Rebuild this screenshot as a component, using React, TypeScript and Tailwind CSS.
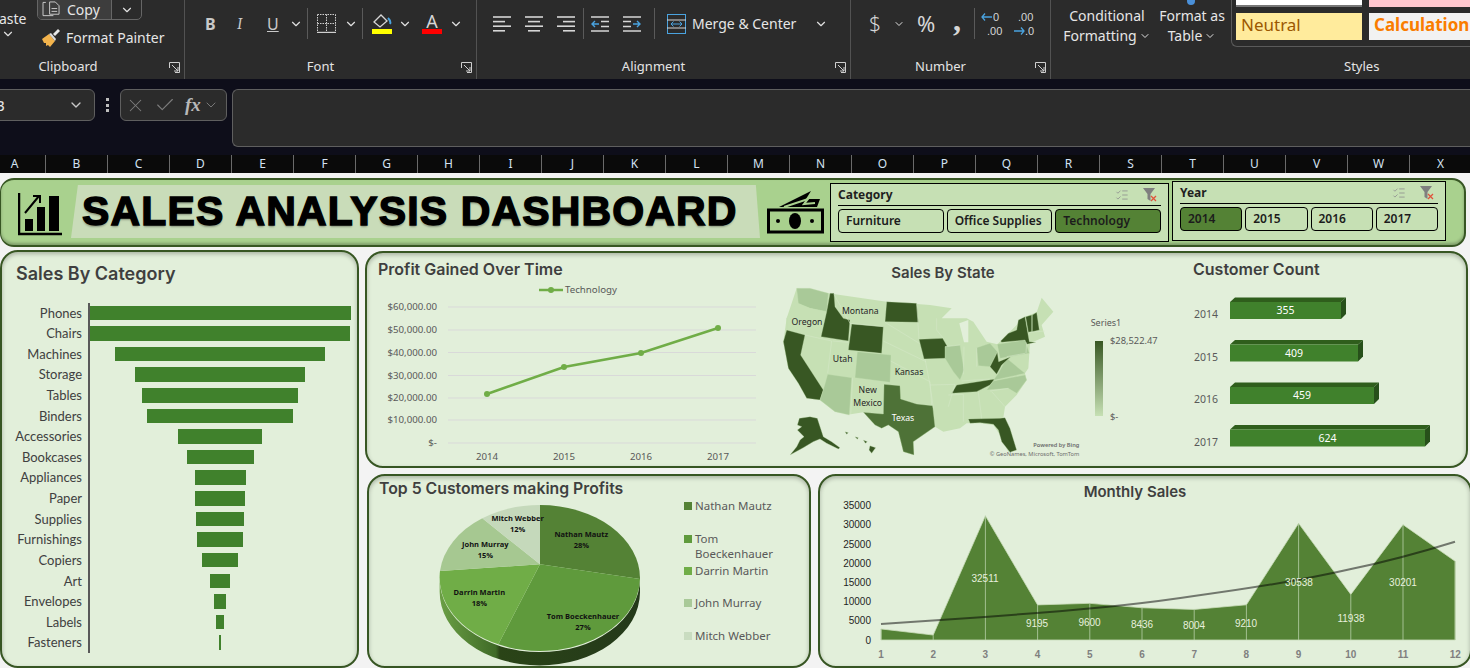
import { Check, ChevronDown, ListChecks, X } from 'lucide-react'

const columns = 'ABCDEFGHIJKLMNOPQRSTUVWX'.split('')

const categories: [string, number][] = [
  ['Phones', 261],
  ['Chairs', 260],
  ['Machines', 210],
  ['Storage', 170],
  ['Tables', 156],
  ['Binders', 146],
  ['Accessories', 84],
  ['Bookcases', 67],
  ['Appliances', 51],
  ['Paper', 50],
  ['Supplies', 48],
  ['Furnishings', 46],
  ['Copiers', 36],
  ['Art', 20],
  ['Envelopes', 12],
  ['Labels', 8],
  ['Fasteners', 2],
]

const LIGHT = '#c6e0b4'
const MID = '#a9c998'
const DARK = '#385723'

// 州の形はだいたいの形
const landmass =
  '110,100 205,115 380,140 510,150 575,160 545,190 620,190 640,200 680,260 712,268 722,258 770,210 795,185 830,172 845,128 880,170 845,210 855,245 810,265 808,295 805,340 795,355 800,375 770,420 735,455 730,488 745,520 768,585 745,590 720,540 700,510 660,505 620,505 600,520 550,530 525,515 460,560 462,600 430,590 415,530 385,510 365,520 345,510 310,472 272,478 225,470 180,435 140,430 115,385 85,340 70,260 80,190'

const states: [string, string][] = [
  ['110,100 150,100 205,115 200,170 150,160 115,145', MID],
  ['110,145 150,160 200,170 183,245 135,240 80,222 80,190', LIGHT],
  ['80,225 135,240 122,300 190,405 180,435 140,430 115,385 85,340 70,260', DARK],
  ['210,115 222,115 225,155 250,190 270,195 265,258 183,245 200,170', DARK],
  ['275,207 370,215 365,295 265,285', DARK],
  ['292,290 393,300 390,382 285,368', MID],
  ['203,358 275,368 268,480 225,470 180,435 190,405', MID],
  ['380,140 470,145 475,202 375,200', DARK],
  ['372,388 420,392 422,432 470,447 518,452 525,515 460,560 462,600 430,590 415,530 385,510 365,520 345,510 310,472 370,477', '#4e7237'],
  ['477,253 548,250 568,285 555,310 492,312', DARK],
  ['555,275 600,270 612,345 600,375 580,350 555,310', MID],
  ['650,278 690,265 712,290 690,335 655,332', MID],
  ['575,415 590,390 705,372 690,390 650,410', DARK],
  ['680,405 700,378 795,360 800,375 770,415 745,400', MID],
  ['700,376 715,355 740,310 795,355', MID],
  ['690,335 712,292 716,320 752,305 725,330 710,358', DARK],
  ['712,268 795,255 808,295 720,310', MID],
  ['722,258 745,235 770,225 775,195 795,185 808,260 828,262 800,268 795,255 725,262', DARK],
  ['797,185 815,180 815,230 805,232', DARK],
  ['817,180 830,172 838,225 817,230', DARK],
  ['625,492 720,490 735,488 750,520 770,585 750,592 725,560 715,525 700,508 660,503 630,505', DARK],
  ['118,490 150,485 172,490 190,545 215,560 240,578 235,582 200,565 180,552 160,560 130,578 90,600 110,575 120,555 132,545 112,525 125,515 112,510', DARK],
  ['255,530 265,533 260,538', DARK],
  ['285,545 295,548 292,553', DARK],
  ['310,555 322,560 316,565', DARK],
  ['330,572 347,578 335,595 327,585', DARK],
]

// 薄い州の境界線
const borders = [
  'M222 118L270 205L370 215M375 202L478 265M370 258L498 320M392 318L510 380L515 450',
  'M135 240L215 258L203 355M218 258L265 262M278 368L272 478M495 312L510 390L520 458',
  'M470 145L477 252M530 190L530 225L550 250M555 275L600 270M612 275L610 358M650 278L650 335',
  'M510 390L585 388L565 455M565 420L610 418L610 500M655 412L665 490M695 410L735 455M690 408L745 400',
  'M605 378L690 372M800 262L798 295M740 305L795 295M808 232L855 228',
]

const mapLabels: [string, number, number, string][] = [
  ['Oregon', 141, 209, '#262626'],
  ['Montana', 301, 176, '#262626'],
  ['Utah', 248, 322, '#262626'],
  ['Kansas', 447, 359, '#262626'],
  ['New', 323, 413, '#262626'],
  ['Mexico', 323, 452, '#262626'],
  ['Texas', 429, 497, '#ffffff'],
]

const customers: [string, number, number, number][] = [
  ['2014', 111, 302, 355],
  ['2015', 128, 344.5, 409],
  ['2016', 144, 387, 459],
  ['2017', 195, 429.5, 624],
]

const monthly = [2900, 1300, 32511, 9195, 9600, 8436, 8004, 9210, 30538, 11938, 30201, 20600]
const monthlyLabels: [string, number, number][] = [
  ['32511', 985, 582],
  ['9195', 1037, 627],
  ['9600', 1089.5, 626],
  ['8436', 1142, 628],
  ['8004', 1194, 629],
  ['9210', 1246, 627],
  ['30538', 1299, 586],
  ['11938', 1351, 622],
  ['30201', 1403, 586],
]

const legend = [
  { name: ['Nathan Mautz'], color: 'bg-[#548235]', mt: 'mt-0' },
  { name: ['Tom', 'Boeckenhauer'], color: 'bg-[#5f9a3c]', mt: 'mt-[17px]' },
  { name: ['Darrin Martin'], color: 'bg-[#70ad47]', mt: 'mt-px' },
  { name: ['John Murray'], color: 'bg-[#a9c998]', mt: 'mt-[17px]' },
  { name: ['Mitch Webber'], color: 'bg-[#c9dcc0]', mt: 'mt-[17px]' },
]

const monthX = (i: number) => 881 + i * 52.2
const monthY = (v: number) => 640 - v * 0.00382

function Chevron({ className = '' }: { className?: string }) {
  return <ChevronDown className={`w-3.5 h-3.5 text-[#e0e0e0] ${className}`} strokeWidth={2} />
}

function Group({
  label,
  width,
  labelPad = 'pr-[20px]',
  children,
}: {
  label: string
  width: string
  labelPad?: string
  children: React.ReactNode
}) {
  return (
    <div className={`${width} h-full shrink-0 flex flex-col border-r border-[#525252]`}>
      <div className="h-[56px] flex overflow-hidden">{children}</div>
      <div className={`relative flex-1 flex items-start justify-center pt-px text-[13px] text-[#e4e4e4] ${labelPad}`}>
        {label}
        <svg viewBox="0 0 11 11" className="absolute right-[4px] top-[6px] w-[11px] h-[11px]" fill="none" stroke="#cfcfcf">
          <path d="M.5 6V.5H10.5V10.5H6M3 3l6 6M9 5v4H5" />
        </svg>
      </div>
    </div>
  )
}

function AlignIcon({ kind }: { kind: 'left' | 'center' | 'right' }) {
  const rows = [18, 12, 18, 12]
  return (
    <svg viewBox="0 0 18 16" className="w-[18px] h-4" stroke="#d6d6d6" strokeWidth="1.6">
      {rows.map((w, i) => {
        const x = kind === 'left' ? 0 : kind === 'center' ? (18 - w) / 2 : 18 - w
        return <line key={i} x1={x} x2={x + w} y1={1 + i * 4.6} y2={1 + i * 4.6} />
      })}
    </svg>
  )
}

function IndentIcon({ flip }: { flip?: boolean }) {
  return (
    <svg viewBox="0 0 18 16" className={`w-[18px] h-4 ${flip ? '-scale-x-100' : ''}`} fill="none">
      <path d="M0 1h18M0 15h18M10 5.5h8M10 10.5h8" stroke="#d6d6d6" strokeWidth="1.6" />
      <path d="M8 8H1M4 5L1 8l3 3" stroke="#4aa3df" strokeWidth="1.4" />
    </svg>
  )
}

function Separator() {
  return <div className="w-px h-[31px] bg-[#5a5a5a] shrink-0" />
}

function Ribbon() {
  return (
    <div className="h-[79px] bg-[#2b2b2b] flex text-[#e6e6e6] overflow-hidden">
      <Group label="Clipboard" width="w-[185px]" labelPad="pr-[48px]">
        <div className="w-[38px] shrink-0 -ml-px flex flex-col items-start pt-[9px]">
          <span className="text-sm leading-[19px] -mb-px">aste</span>
          <Chevron className="ml-[2px]" />
        </div>
        <div className="flex flex-col items-start">
          <div className="flex w-[105px] h-[21px] -mt-px border border-[#666] rounded-b-[5px] overflow-hidden">
            <div className="w-[74px] bg-[#3d3d3d] flex items-center gap-[5px] pl-1 border-r border-[#666] text-sm leading-[18px]">
              <svg viewBox="0 0 20 18" className="w-[19px] h-[17px] shrink-0" fill="none" stroke="#cfcfcf">
                <path d="M4 1.5H1v14h11M8 1v13h10V5l-4-4z" />
                <path d="M10 8h6M10 11h6" />
              </svg>
              <span className="pl-px">Copy</span>
            </div>
            <div className="flex-1 flex items-center justify-center">
              <Chevron />
            </div>
          </div>
          <div className="flex items-center gap-[5px] pl-1 mt-[8px] text-sm whitespace-nowrap">
            <svg viewBox="0 0 20 20" className="w-5 h-5 shrink-0">
              <path d="M1 11l7-5 6 7-5 6-2-2-2 1 0-3-2 0z" fill="#f2b34c" />
              <path d="M8 6l6 7 1-2-5-6z" fill="#ddd" />
              <path d="M12 6l5-5 2 2-5 5z" fill="#e8e8e8" />
            </svg>
            Format Painter
          </div>
        </div>
      </Group>

      <Group label="Font" width="w-[292px]">
        <div className="flex items-center h-[47px] pl-[20px]">
          <span className="w-[10px] text-base font-bold text-[#c9c9c9]">B</span>
          <span className="w-[10px] ml-[22px] text-base italic font-serif text-[#c9c9c9]">I</span>
          <span className="w-[12px] ml-[20px] text-base underline text-[#c9c9c9]">U</span>
          <Chevron className="ml-[10px]" />
          <div className="ml-[4px]">
            <Separator />
          </div>
          <svg viewBox="0 0 19 19" className="w-[19px] h-[19px] ml-[9px]" fill="none" stroke="#cfcfcf" strokeDasharray="1.5 1">
            <path d="M.5.5h18M.5 9.5h18M.5.5v18M9.5.5v18M18.5.5v18" />
            <path d="M0 18.5h19" strokeDasharray="none" strokeWidth="1.4" />
          </svg>
          <Chevron className="ml-[8px]" />
          <div className="ml-[4px]">
            <Separator />
          </div>
          <div className="ml-[9px] w-[20px] flex flex-col items-center">
            <svg viewBox="0 0 20 16" className="w-5 h-4" fill="none" stroke="#d6d6d6" strokeWidth="1.3">
              <path d="M2 9l7-7 6 6-7 6z" />
              <path d="M16 5c2 2 3 4 2 6" stroke="#4aa3df" strokeWidth="2" />
            </svg>
            <div className="w-5 h-[5px] bg-[#ffff00]" />
          </div>
          <Chevron className="ml-[6px]" />
          <div className="ml-[10px] w-[20px] flex flex-col items-center">
            <span className="text-lg leading-[16px] h-4 text-[#d6d6d6]">A</span>
            <div className="w-5 h-[5px] bg-[#ff0000]" />
          </div>
          <Chevron className="ml-[7px]" />
        </div>
      </Group>

      <Group label="Alignment" width="w-[374px]">
        <div className="flex items-center h-[47px] pl-[16px]">
          <AlignIcon kind="left" />
          <div className="ml-[14px]">
            <AlignIcon kind="center" />
          </div>
          <div className="ml-[14px]">
            <AlignIcon kind="right" />
          </div>
          <div className="ml-[8px]">
            <Separator />
          </div>
          <div className="ml-[7px]">
            <IndentIcon />
          </div>
          <div className="ml-[14px]">
            <IndentIcon flip />
          </div>
          <div className="ml-[13px]">
            <Separator />
          </div>
          <svg viewBox="0 0 19 20" className="w-[19px] h-5 ml-[12px]" fill="none">
            <rect x=".5" y=".5" width="18" height="19" stroke="#4aa3df" />
            <path d="M0 6h19M0 14h19" stroke="#d6d6d6" />
            <path d="M4 10h11M6.5 7.5L4 10l2.5 2.5M12.5 7.5L15 10l-2.5 2.5" stroke="#4aa3df" />
          </svg>
          <span className="ml-[6px] text-sm whitespace-nowrap">Merge &amp; Center</span>
          <Chevron className="ml-[18px]" />
        </div>
      </Group>

      <Group label="Number" width="w-[200px]">
        <div className="flex items-center h-[47px] pl-[18px]">
          <span className="text-[21px] w-[12px] text-[#d6d6d6] font-light">$</span>
          <Chevron className="ml-[12px] !w-3 !h-3" />
          <span className="text-[22px] ml-[12px] text-[#d6d6d6] w-[20px]">%</span>
          <span className="text-[32px] font-bold ml-[16px] w-[9px] text-[#d6d6d6] leading-[18px] h-[26px] font-['Liberation_Serif',serif]">,</span>
          <div className="ml-[12px]">
            <Separator />
          </div>
          <svg viewBox="0 0 24 26" className="w-6 h-[26px] ml-[5px]" fontFamily="Liberation Sans, sans-serif" fontSize="11" fill="#d6d6d6">
            <text x="13" y="10">0</text>
            <text x="7" y="24">.00</text>
            <path d="M12 6H2M5 2.5L2 6l3 3.5" stroke="#4aa3df" strokeWidth="1.3" fill="none" />
          </svg>
          <svg viewBox="0 0 24 26" className="w-6 h-[26px] ml-[8px]" fontFamily="Liberation Sans, sans-serif" fontSize="11" fill="#d6d6d6">
            <text x="6" y="10">.00</text>
            <text x="13" y="24">.0</text>
            <path d="M2 20h10M9 16.5l3 3.5-3 3.5" stroke="#4aa3df" strokeWidth="1.3" fill="none" />
          </svg>
        </div>
      </Group>

      <div className="flex-1 h-full flex flex-col">
        <div className="h-[56px] flex">
          <div className="w-[112px] shrink-0 pt-[6px] text-center text-sm leading-5">
            Conditional
            <div className="flex items-center justify-center">
              Formatting
              <Chevron className="!w-3 !h-3 ml-0.5" />
            </div>
          </div>
          <div className="w-[72px] shrink-0 -ml-[7px] pt-[6px] text-center text-sm leading-5 relative">
            <div className="absolute left-[31px] -top-[3px] w-2 h-2 rounded-full bg-[#4a90d9]" />
            Format as
            <div className="flex items-center justify-center">
              Table
              <Chevron className="!w-3 !h-3 ml-0.5" />
            </div>
          </div>
          <div className="flex-1 ml-[3px] h-[47px] border-l border-b border-[#5a5a5a] rounded-bl-[6px] pl-[4px] overflow-hidden">
            <div className="flex gap-[7px] h-[7px]">
              <div className="w-[126px] bg-white border-b-2 border-[#777]" />
              <div className="w-[110px] bg-[#ffc7ce]" />
            </div>
            <div className="flex gap-[7px] h-[27px] mt-[6px]">
              <div className="w-[126px] bg-[#ffeb9c] text-[#9c5700] text-[17px] leading-[24px] pl-[5px]">Neutral</div>
              <div className="w-[110px] bg-[#f2f2f2] text-[#fa7d00] text-[17px] leading-[24px] font-bold pl-[5px] whitespace-nowrap">Calculation</div>
            </div>
          </div>
        </div>
        <div className="flex-1 pt-px pl-[293px] text-[13px] text-[#e4e4e4]">Styles</div>
      </div>
    </div>
  )
}

function FormulaBar() {
  return (
    <div className="h-[76px] bg-[#0e0e1a] pt-[10px] flex items-start">
      <div className="w-[96px] h-[32px] -ml-px bg-[#2b2b2b] border border-[#5f5f5f] rounded-r-[6px] flex items-center justify-between pr-[10px] overflow-hidden">
        <span className="text-[15px] text-[#e6e6e6] -ml-[5px]">B</span>
        <ChevronDown className="w-4 h-4 text-[#c8c8c8]" />
      </div>
      <div className="w-[3px] h-[14px] ml-[11px] mt-[9px] flex flex-col justify-between">
        <div className="h-[3px] bg-[#bdbdbd]" />
        <div className="h-[3px] bg-[#bdbdbd]" />
        <div className="h-[3px] bg-[#bdbdbd]" />
      </div>
      <div className="w-[107px] h-[32px] ml-[11px] bg-[#2b2b2b] border border-[#5f5f5f] rounded-[6px] flex items-center pl-1 text-[#7d7d7d]">
        <X className="w-[21px] h-[21px]" strokeWidth={1.2} />
        <Check className="w-[22px] h-[22px] ml-[8px]" strokeWidth={1.2} />
        <span className="ml-[9px] text-[19px] italic font-bold text-[#b8b8b8] font-['Liberation_Serif',serif]">fx</span>
        <ChevronDown className="w-4 h-4 ml-0.5" strokeWidth={1.4} />
      </div>
      <div className="flex-1 h-[58px] ml-[5px] bg-[#2b2b2b] border border-[#5f5f5f] rounded-l-[6px] border-r-0" />
    </div>
  )
}

function ColumnHeaders() {
  return (
    <div className="h-[18px] bg-[#0a0a0a] flex overflow-hidden -ml-[16px] w-[1486px]">
      {columns.map((c) => (
        <div key={c} className="w-[62px] shrink-0 border-r border-[#6a6a6a] text-center text-xs leading-[18px] text-[#d4e2f2]">
          {c}
        </div>
      ))}
    </div>
  )
}

function SlicerIcons() {
  return (
    <div className="flex items-center gap-[14px]">
      <ListChecks className="w-[14px] h-[14px] text-[#8f8f8f]" strokeWidth={1.4} />
      <svg viewBox="0 0 14 14" className="w-[14px] h-[14px]">
        <path d="M0 0h12L7.5 6v7L4.5 11V6z" fill="#7f7f7f" />
        <path d="M8 8l5 5M13 8l-5 5" stroke="#e0533c" strokeWidth="1.3" />
      </svg>
    </div>
  )
}

function Slicer({
  title,
  items,
  active,
  className,
}: {
  title: string
  items: string[]
  active: string
  className: string
}) {
  return (
    <div className={`border border-black bg-[#c6e0b4] px-[7px] ${className}`}>
      <div className="flex items-center justify-between h-[22px] border-b border-black pr-[4px]">
        <span className="text-xs font-bold text-[#1f1f1f]">{title}</span>
        <SlicerIcons />
      </div>
      <div className="flex mt-[3px] gap-[3px]">
        {items.map((item) => (
          <div
            key={item}
            className={`flex-1 h-[24px] border border-black rounded-[4px] pl-[7px] text-xs leading-[22px] font-semibold whitespace-nowrap text-[#1c1c1c] ${
              item === active ? 'bg-[#548235]' : ''
            }`}
          >
            {item}
          </div>
        ))}
      </div>
    </div>
  )
}

function TitleBar() {
  return (
    <div className="w-[1466px] h-[69px] bg-[#a9d18e] border-2 border-[#375623] border-l rounded-[14px] flex items-start shadow-[inset_0_-2px_3px_rgba(0,0,0,0.25)]">
      <svg viewBox="0 0 44 44" className="w-[44px] h-[44px] ml-[17px] mt-[13px] shrink-0">
        <path d="M1 0v41h43" fill="none" stroke="#000" strokeWidth="2.5" />
        <rect x="7" y="26" width="8" height="12" />
        <rect x="19" y="14" width="8" height="24" />
        <rect x="31" y="3" width="10" height="35" />
        <path d="M7 20L21 3M15 3h7v7" fill="none" stroke="#000" strokeWidth="2" />
      </svg>
      <div className="w-[689px] h-[53px] ml-[9px] mt-[5px] shrink-0 bg-[#c9dcb9] [clip-path:polygon(1%_0,99.4%_0,100%_100%,0_100%)] flex items-center pl-[11px]">
        <span className="text-[41px] leading-none font-bold tracking-[1.15px] text-black whitespace-nowrap [-webkit-text-stroke:1.4px_#000] [text-shadow:0_2px_2px_rgba(0,0,0,0.3)] font-['Liberation_Sans',sans-serif]">
          SALES ANALYSIS DASHBOARD
        </span>
      </div>
      <svg viewBox="0 0 57 44" className="w-[57px] h-[44px] ml-[7px] mt-[10px] shrink-0">
        <path d="M12 17L44 1l-5 8 14 0-3 8z" fill="#000" />
        <path d="M17 17l24-8-4 5 11-1" fill="none" stroke="#a9d18e" strokeWidth="2" />
        <rect x="1.5" y="20" width="54" height="22" fill="#a9d18e" stroke="#000" strokeWidth="3" />
        <ellipse cx="28" cy="31" rx="6" ry="8" />
        <circle cx="11" cy="31" r="2" />
        <circle cx="45" cy="31" r="2" />
      </svg>
      <Slicer
        title="Category"
        items={['Furniture', 'Office Supplies', 'Technology']}
        active="Technology"
        className="w-[339px] h-[59px] ml-[6px] mt-[3px] shrink-0"
      />
      <Slicer
        title="Year"
        items={['2014', '2015', '2016', '2017']}
        active="2014"
        className="w-[274px] h-[60px] ml-[3px] mt-px shrink-0"
      />
    </div>
  )
}

function Panel({ className, children }: { className: string; children: React.ReactNode }) {
  return (
    <div
      className={`border-2 border-[#375623] rounded-[18px] bg-[#e2efda] overflow-hidden shadow-[inset_0_2px_4px_rgba(0,0,0,0.25)] font-['Inter',sans-serif] ${className}`}
    >
      {children}
    </div>
  )
}

function SalesByCategory() {
  return (
    <Panel className="w-[359px] h-[418px] shrink-0">
      <h2 className="text-lg font-semibold text-[#3f3f3f] pl-[14px] pt-[8px] h-[50.5px]">Sales By Category</h2>
      <div className="grid grid-rows-[repeat(17,1fr)] h-[350.5px] font-['Lato',sans-serif]">
        {categories.map(([name, width]) => (
          <div key={name} className="flex items-stretch">
            <div className="w-[80px] text-right text-[13px] leading-[20px] text-[#404040]">{name}</div>
            <div className="ml-[6px] w-[262px] border-l-2 border-[#595959] flex items-center justify-center">
              <div className="h-[14.5px] shrink-0 bg-[#40812c]" style={{ width }} />
            </div>
          </div>
        ))}
      </div>
    </Panel>
  )
}

function ProfitChart() {
  const grid = [307, 330, 352.5, 375.5, 398, 420, 443]
  const labels = ['$60,000.00', '$50,000.00', '$40,000.00', '$30,000.00', '$20,000.00', '$10,000.00', '$-']
  const points: [number, number][] = [
    [487, 394],
    [564, 367],
    [641, 353],
    [718, 328],
  ]
  return (
    <div className="w-[393px] shrink-0 flex flex-col">
      <h2 className="h-[30px] pl-[11px] pt-[4px] text-base font-semibold text-[#3f3f3f] whitespace-nowrap">Profit Gained Over Time</h2>
      <svg viewBox="367 283 393 183" className="w-[393px] h-[183px]" fontFamily="Noto Sans, sans-serif" fontSize="9.7" fill="#595959">
        <line x1="539" x2="563" y1="290" y2="290" stroke="#70ad47" strokeWidth="2.5" />
        <circle cx="551" cy="290" r="3" fill="#70ad47" />
        <text x="565" y="293">Technology</text>
        {grid.map((y, i) => (
          <g key={y}>
            <line x1="448" x2="756" y1={y} y2={y} stroke="#d9d9d9" />
            <text x="437" y={y + 3} textAnchor="end">
              {labels[i]}
            </text>
          </g>
        ))}
        {['2014', '2015', '2016', '2017'].map((year, i) => (
          <text key={year} x={487 + i * 77} y="460" textAnchor="middle">
            {year}
          </text>
        ))}
        <polyline points={points.map((p) => p.join(',')).join(' ')} fill="none" stroke="#70ad47" strokeWidth="2.5" />
        {points.map(([x, y]) => (
          <circle key={x} cx={x} cy={y} r="3" fill="#70ad47" />
        ))}
      </svg>
    </div>
  )
}

function StateMap() {
  return (
    <div className="w-[420px] shrink-0 flex flex-col">
      <h2 className="h-[30px] w-[366px] pt-[9px] text-center text-[15px] font-semibold text-[#3f3f3f] whitespace-nowrap">Sales By State</h2>
      <svg viewBox="0 84 1260 549" className="w-[420px] h-[183px]" fontFamily="Noto Sans, sans-serif" fontSize="26">
        <defs>
          <linearGradient id="mapScale" x1="0" x2="0" y1="0" y2="1">
            <stop offset="0" stopColor="#385723" />
            <stop offset="1" stopColor="#c6e0b4" />
          </linearGradient>
        </defs>
        <polygon points={landmass} fill={LIGHT} />
        {states.map(([points, fill]) => (
          <polygon key={points} points={points} fill={fill} stroke={LIGHT} strokeWidth="1" />
        ))}
        <path d={borders.join('')} fill="none" stroke="#d6e8ca" strokeWidth="1.5" />
        <polygon points="598,205 625,195 625,262 612,262" fill="#e2efda" />
        {mapLabels.map(([text, x, y, fill]) => (
          <text key={text} x={x} y={y} fill={fill} textAnchor="middle">
            {text}
          </text>
        ))}
        <text x="992" y="214" fill="#595959" fontSize="27">Series1</text>
        <rect x="1005" y="258" width="24" height="225" fill="url(#mapScale)" />
        <text x="1050" y="266" fill="#595959" fontSize="28">$28,522.47</text>
        <text x="1050" y="494" fill="#595959" fontSize="28">$-</text>
        <text x="958" y="575" fill="#6b6b6b" fontSize="17" fontWeight="600" textAnchor="end">Powered by Bing</text>
        <text x="958" y="602" fill="#6b6b6b" fontSize="17" textAnchor="end">© GeoNames, Microsoft, TomTom</text>
      </svg>
    </div>
  )
}

function CustomerCount() {
  return (
    <div className="flex-1 flex flex-col">
      <h2 className="h-[30px] pl-[13px] pt-[4px] text-base font-semibold text-[#3f3f3f] whitespace-nowrap">Customer Count</h2>
      <svg viewBox="1180 283 287 183" className="w-[287px] h-[183px]" fontFamily="Noto Sans, sans-serif" fontSize="10.5">
        {customers.map(([year, width, y, count]) => (
          <g key={year}>
            <polygon points={`1230,${y} 1235,${y - 4.5} ${1235 + width},${y - 4.5} ${1230 + width},${y}`} fill="#2f5e1c" />
            <polygon points={`${1230 + width},${y} ${1235 + width},${y - 4.5} ${1235 + width},${y + 12} ${1230 + width},${y + 17}`} fill="#27501a" />
            <rect x="1230" y={y} width={width} height="17" fill="#40812c" />
            <text x={1230 + width / 2} y={y + 12} fill="#fff" textAnchor="middle">
              {count}
            </text>
            <text x="1194" y={y + 16} fill="#595959">
              {year}
            </text>
          </g>
        ))}
      </svg>
    </div>
  )
}

function TopCustomers() {
  const arc = 'A300 220 0 0 1'
  return (
    <Panel className="w-[444px] h-[194px] ml-[2px] shrink-0">
      <h2 className="h-[26px] pl-[10px] pt-px text-[15.8px] font-semibold text-[#3f3f3f] whitespace-nowrap">Top 5 Customers making Profits</h2>
      <div className="flex">
        <svg viewBox="12 81 933 492" className="w-[311px] h-[164px] shrink-0" fontFamily="Open Sans, sans-serif" fontSize="22.5" fontWeight="700" fill="#111" textAnchor="middle">
          <defs>
            <linearGradient id="pieSide" x1="0" x2="1" y1="0" y2="0">
              <stop offset="0" stopColor="#6b9f45" />
              <stop offset="0.28" stopColor="#3f6a27" />
              <stop offset="0.3" stopColor="#2a4417" />
              <stop offset="1" stopColor="#24391a" />
            </linearGradient>
          </defs>
          <path d="M224 310 A300 220 0 0 0 825 312 L825 352 A300 220 0 0 1 224 350 Z" fill="url(#pieSide)" />
          <path d={`M525 268 L525 90 ${arc} 825 312 Z`} fill="#548235" />
          <path d={`M525 268 L825 312 ${arc} 400 508 Z`} fill="#5f9a3c" />
          <path d={`M525 268 L400 508 ${arc} 225 288 Z`} fill="#70ad47" />
          <path d={`M525 268 L225 288 ${arc} 352 130 Z`} fill="#a6c891" />
          <path d={`M525 268 L352 130 ${arc} 525 90 Z`} fill="#c5d9bb" />
          <text x="649" y="185">Nathan Mautz</text>
          <text x="649" y="218">28%</text>
          <text x="654" y="431">Tom Boeckenhauer</text>
          <text x="654" y="464">27%</text>
          <text x="343" y="359">Darrin Martin</text>
          <text x="343" y="392">18%</text>
          <text x="361" y="215">John Murray</text>
          <text x="361" y="248">15%</text>
          <text x="458" y="137">Mitch Webber</text>
          <text x="458" y="170">12%</text>
        </svg>
        <div className="ml-[4px] -mt-[4px] font-['Noto_Sans',sans-serif] text-[11.5px] text-[#595959]">
          {legend.map((item) => (
            <div key={item.name[0]} className={`flex items-start ${item.mt}`}>
              <div className={`w-2 h-2 mt-1 mr-[3px] shrink-0 ${item.color}`} />
              <div className="leading-[15.5px]">
                {item.name.map((line) => (
                  <div key={line}>{line}</div>
                ))}
              </div>
            </div>
          ))}
        </div>
      </div>
    </Panel>
  )
}

function MonthlySales() {
  const area = monthly.map((v, i) => `${monthX(i)},${monthY(v)}`).join(' ')
  const axis = ['0', '5000', '10000', '15000', '20000', '25000', '30000', '35000']
  return (
    <Panel className="w-[654px] h-[194px] ml-[7px] shrink-0">
      <h2 className="h-[22px] w-[630px] pt-[6px] leading-5 text-center text-[15px] font-semibold text-[#3f3f3f]">Monthly Sales</h2>
      <svg viewBox="820 498 650 168" className="w-[650px] h-[168px]" fontFamily="Liberation Sans, sans-serif" fontSize="10">
        {axis.map((label, i) => (
          <text key={label} x="871" y={643.5 - i * 19.2} textAnchor="end" fill="#1f1f1f">
            {label}
          </text>
        ))}
        <polygon points={`881,640 ${area} ${monthX(11)},640`} fill="#548235" stroke="#c9dcb9" strokeWidth="0.8" />
        {monthly.map((v, i) => (
          <line key={i} x1={monthX(i)} x2={monthX(i)} y1={monthY(v)} y2="640" stroke="#b8cfa8" strokeWidth="0.8" />
        ))}
        <path
          d="M881 624 C 930 621 985 617 1037 613 C 1090 609 1142 604 1194 596 C 1246 589 1299 581 1351 569 C 1390 561 1425 551 1455 541.7"
          fill="none"
          stroke="#000"
          strokeOpacity="0.5"
          strokeWidth="2"
        />
        {monthlyLabels.map(([label, x, y]) => (
          <text key={label} x={x} y={y} fill="#e7f0de" textAnchor="middle">
            {label}
          </text>
        ))}
        {monthly.map((_, i) => (
          <text key={i} x={monthX(i)} y="658" fill="#7f7f7f" fontWeight="700" textAnchor="middle">
            {i + 1}
          </text>
        ))}
      </svg>
    </Panel>
  )
}

export default function App() {
  return (
    <div className="w-[1470px] h-[668px] overflow-hidden font-['Noto_Sans',sans-serif] bg-[#f3f3f3]">
      <Ribbon />
      <FormulaBar />
      <ColumnHeaders />
      <div className="pt-[5px]">
        <TitleBar />
        <div className="flex mt-[3px]">
          <SalesByCategory />
          <div className="ml-[6px] w-[1105px] shrink-0 pt-px">
            <Panel className="w-[1103px] h-[217px] flex">
              <ProfitChart />
              <StateMap />
              <CustomerCount />
            </Panel>
            <div className="flex mt-[6px]">
              <TopCustomers />
              <MonthlySales />
            </div>
          </div>
        </div>
      </div>
    </div>
  )
}
